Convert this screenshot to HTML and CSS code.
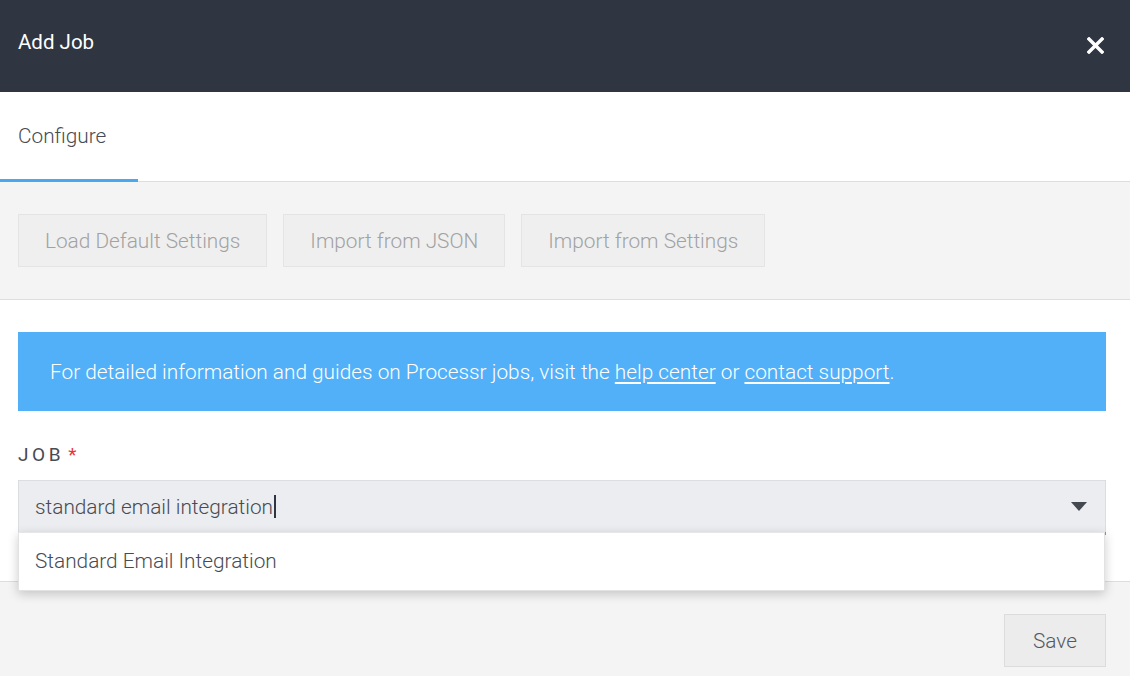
FILE: index.html
```html
<!DOCTYPE html>
<html>
<head>
<meta charset="utf-8">
<link rel="stylesheet" href="styles.css">
</head>
<body>
<div class="modal">
  <div class="header">
    <div class="title">Add Job</div>
    <svg class="close" width="17" height="17" viewBox="0 0 17 17"><path d="M2 2L15 15M15 2L2 15" stroke="#fff" stroke-width="3.4" stroke-linecap="square"/></svg>
  </div>
  <div class="tabs">
    <div class="tab active">Configure</div>
  </div>
  <div class="toolbar">
    <button class="btn">Load Default Settings</button>
    <button class="btn">Import from JSON</button>
    <button class="btn">Import from Settings</button>
  </div>
  <div class="content">
    <div class="banner">For detailed information and guides on Processr jobs, visit the&nbsp;<a href="#">help center</a>&nbsp;or&nbsp;<a href="#">contact support</a>.</div>
    <div class="label">JOB<span class="req">*</span></div>
    <div class="field">
      <div class="input"><span class="value">standard email integration</span><span class="caret"></span></div>
      <svg class="arrow" width="16" height="9" viewBox="0 0 16 9"><path d="M0 0H16L8 9Z" fill="#444850"/></svg>
      <div class="menu">
        <div class="option">Standard Email Integration</div>
      </div>
    </div>
  </div>
  <div class="footer">
    <button class="btn save">Save</button>
  </div>
</div>
</body>
</html>
```
FILE: styles.css
```css
* { box-sizing: border-box; }
html, body { margin: 0; padding: 0; }
body {
  font-family: Roboto, "Liberation Sans", sans-serif;
  font-weight: 300;
  width: 1130px;
  height: 676px;
  overflow: hidden;
  background: #fff;
}
.modal {
  display: flex;
  flex-direction: column;
  height: 676px;
}
.header {
  height: 92px;
  background: #2f3541;
  display: flex;
  align-items: center;
  justify-content: space-between;
  padding: 0 26px 0 18px;
  flex-shrink: 0;
}
.title {
  color: #fff;
  font-size: 20.5px;
  font-weight: 400;
  margin-top: -8px;
}
.close { display: block; margin-top: -1px; }
.tabs {
  height: 90px;
  border-bottom: 1px solid #dedede;
  display: flex;
  flex-shrink: 0;
}
.tab {
  width: 138px;
  padding-left: 18px;
  display: flex;
  align-items: center;
  font-size: 20.8px;
  color: #474b52;
  height: 90px;
  padding-top: 1px;
}
.tab.active {
  border-bottom: 3px solid #4aa9ee;
  margin-bottom: -1px;
}
.toolbar {
  background: #f4f4f4;
  border-bottom: 1px solid #dedede;
  padding: 32px 18px;
  display: flex;
  gap: 16px;
  flex-shrink: 0;
}
.btn {
  font-family: Roboto, "Liberation Sans", sans-serif;
  font-weight: 300;
  font-size: 20.8px;
  height: 53px;
  padding: 0 26px;
  background: #efefef;
  border: 1px solid #e4e4e4;
  color: #a2a2a2;
  border-radius: 0;
}
.content {
  padding: 32px 24px 49px 18px;
  flex-shrink: 0;
}
.banner {
  height: 79px;
  background: #51b0f8;
  color: #fff;
  font-size: 20.8px;
  display: flex;
  align-items: center;
  padding: 0 32px;
}
.banner a { color: #fff; text-decoration: underline; text-underline-offset: 3px; }
.label {
  margin-top: 32px;
  height: 24px;
  line-height: 24px;
  font-size: 19px;
  font-weight: 400;
  letter-spacing: 3.6px;
  color: #474b52;
  margin-bottom: 13px;
}
.req { color: #e8372d; letter-spacing: 0; margin-left: 4px; }
.field {
  position: relative;
  height: 52px;
}
.field::after {
  content: "";
  position: absolute;
  left: 0;
  right: 0;
  top: 52px;
  height: 3px;
  background: #4aa9ee;
}
.input {
  height: 52px;
  background: #ecedf0;
  border: 1px solid #dcdde0;
  border-bottom: none;
  display: flex;
  align-items: center;
  padding-left: 16px;
  font-size: 20.8px;
  color: #474b52;
}
.caret {
  display: inline-block;
  width: 2px;
  height: 23px;
  background: #2f3541;
  margin-left: 1px;
}
.arrow {
  position: absolute;
  right: 19px;
  top: 22px;
}
.menu {
  position: absolute;
  left: 0;
  top: 52px;
  width: 1087px;
  background: #fff;
  box-shadow: 0 3px 10px rgba(0,0,0,0.2);
  border: 1px solid #e2e2e2;
  border-top: 1px solid #e6e6e6;
  z-index: 2;
}
.option {
  height: 57px;
  display: flex;
  align-items: center;
  padding-left: 16px;
  padding-bottom: 1px;
  font-size: 20.8px;
  color: #474b52;
}
.footer {
  flex: 1;
  background: #f4f4f4;
  border-top: 1px solid #dedede;
  padding: 32px 24px 0 18px;
  display: flex;
  justify-content: flex-end;
  align-items: flex-start;
}
.save {
  color: #55595f;
  padding: 0 28px;
  background: #ececec;
  border-color: #dcdcdc;
}
```
